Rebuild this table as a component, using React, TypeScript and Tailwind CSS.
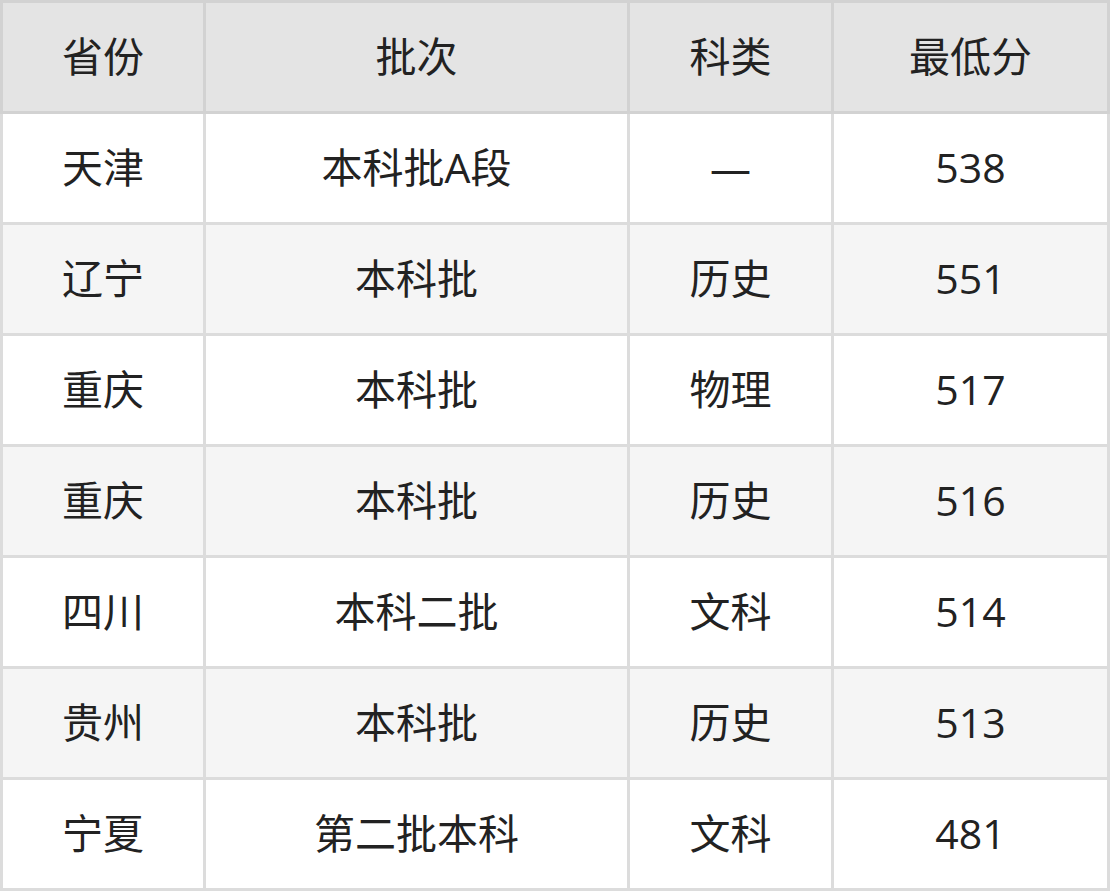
const HEADERS = ['省份', '批次', '科类', '最低分']

const ROWS: string[][] = [
  ['天津', '本科批A段', '—', '538'],
  ['辽宁', '本科批', '历史', '551'],
  ['重庆', '本科批', '物理', '517'],
  ['重庆', '本科批', '历史', '516'],
  ['四川', '本科二批', '文科', '514'],
  ['贵州', '本科批', '历史', '513'],
  ['宁夏', '第二批本科', '文科', '481'],
]

export default function App() {
  return (
    <div className="w-[1110px] bg-white">
      <table
        className="w-[1110px] table-fixed border-collapse text-center text-[41px] text-[#222222]"
        style={{ fontFamily: '"Open Sans", "Noto Sans CJK SC", sans-serif' }}
      >
        <colgroup>
          <col className="w-[203px]" />
          <col className="w-[424px]" />
          <col className="w-[204px]" />
          <col />
        </colgroup>
        <thead>
          <tr className="h-[111px] bg-[#e4e4e4]">
            {HEADERS.map((h) => (
              <th key={h} className="border-[3px] border-[#d2d2d2] p-0 font-normal">
                {h}
              </th>
            ))}
          </tr>
        </thead>
        <tbody>
          {ROWS.map((row, i) => (
            <tr key={i} className={i % 2 === 1 ? 'h-[111px] bg-[#f5f5f5]' : 'h-[111px] bg-white'}>
              {row.map((cell, j) => (
                <td key={j} className="border-[3px] border-[#dcdcdc] p-0">
                  {cell}
                </td>
              ))}
            </tr>
          ))}
        </tbody>
      </table>
    </div>
  )
}
